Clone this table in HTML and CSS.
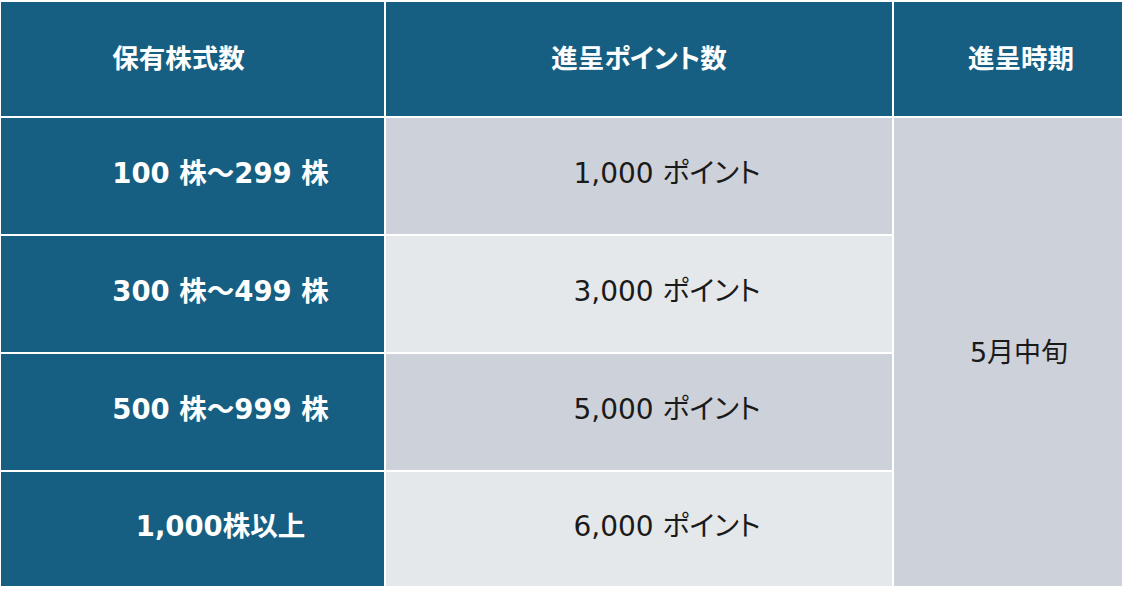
FILE: index.html
```html
<!DOCTYPE html>
<html lang="ja">
<head>
<meta charset="utf-8">
<title>株主優待ポイント</title>
<link rel="stylesheet" href="styles.css">
</head>
<body>
<div class="table">
  <div class="cell head c1h">保有株式数</div>
  <div class="cell head c2h">進呈ポイント数</div>
  <div class="cell head c3h">進呈時期</div>

  <div class="cell rowhead">100 株～299 株</div>
  <div class="cell val dark">1,000 ポイント</div>
  <div class="cell period">5月中旬</div>

  <div class="cell rowhead">300 株～499 株</div>
  <div class="cell val light">3,000 ポイント</div>

  <div class="cell rowhead">500 株～999 株</div>
  <div class="cell val dark">5,000 ポイント</div>

  <div class="cell rowhead">1,000株以上</div>
  <div class="cell val light">6,000 ポイント</div>
</div>
</body>
</html>
```
FILE: styles.css
```css
html, body {
  margin: 0;
  padding: 0;
  background: #ffffff;
}

.table {
  display: grid;
  grid-template-columns: 383px 506px 228px;
  grid-template-rows: 114px 116px 116px 116px 114px;
  column-gap: 2px;
  row-gap: 2px;
  padding: 2px 0 0 1px;
  font-family: "DejaVu Sans", "Noto Sans CJK JP", sans-serif;
  font-feature-settings: "palt";
}

.cell {
  display: flex;
  align-items: center;
  justify-content: center;
  font-size: 28px;
  line-height: 1;
  padding-bottom: 4px;
  box-sizing: border-box;
}

.head {
  background: #175f82;
  color: #ffffff;
  font-weight: 700;
  font-family: "Noto Sans CJK JP", sans-serif;
  font-size: 26.5px;
}

.c1h { padding-right: 28px; }
.c3h { padding-left: 26px; }

.rowhead {
  background: #175f82;
  color: #ffffff;
  font-weight: 700;
  font-size: 27.5px;
  padding-left: 56px;
}

.val {
  color: #1a1a1a;
  padding-left: 56px;
}

.dark { background: #cdd1d9; }
.light { background: #e5e8eb; }

.period {
  grid-column: 3;
  grid-row: 2 / span 4;
  background: #cdd1d9;
  color: #1a1a1a;
  font-size: 27px;
  padding-left: 22px;
  padding-bottom: 0;
}
```
